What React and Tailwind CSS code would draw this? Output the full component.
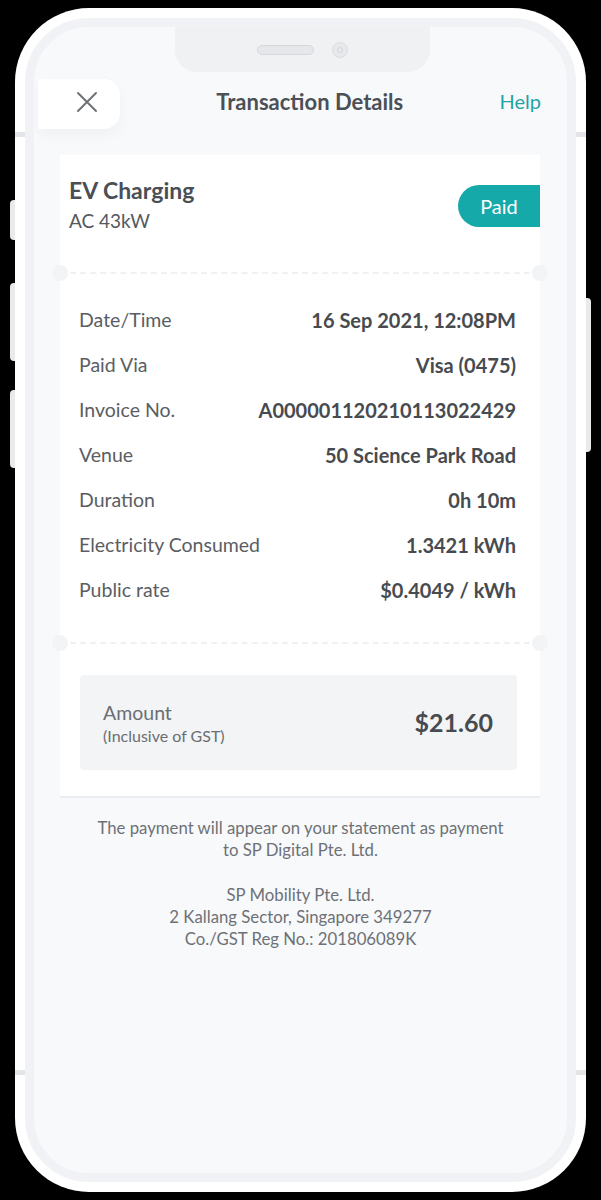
const rows = [
  { label: "Date/Time", value: "16 Sep 2021, 12:08PM" },
  { label: "Paid Via", value: "Visa (0475)" },
  { label: "Invoice No.", value: "A000001120210113022429" },
  { label: "Venue", value: "50 Science Park Road" },
  { label: "Duration", value: "0h 10m" },
  { label: "Electricity Consumed", value: "1.3421 kWh" },
  { label: "Public rate", value: "$0.4049 / kWh" },
];

const Divider = () => (
  <div className="relative h-0 border-t-2 border-dashed border-[#f0f1f4]">
    <span className="absolute -left-[8px] -top-[9px] w-[16px] h-[16px] rounded-full bg-[#f3f4f6]" />
    <span className="absolute -right-[8px] -top-[9px] w-[16px] h-[16px] rounded-full bg-[#f3f4f6]" />
  </div>
);

const App = () => {
  return (
    <div className="w-[601px] h-[1200px] bg-black pt-[8px] pl-[15px] font-['Lato',sans-serif]">
      <div className="relative w-[571px] h-[1184px] rounded-[74px] bg-white p-[10px]">
        {/* side buttons */}
        <span className="absolute -left-[5px] top-[192px] w-[5px] h-[40px] rounded-l bg-[#e9eaec]" />
        <span className="absolute -left-[5px] top-[275px] w-[5px] h-[78px] rounded-l bg-[#e9eaec]" />
        <span className="absolute -left-[5px] top-[382px] w-[5px] h-[78px] rounded-l bg-[#e9eaec]" />
        <span className="absolute -right-[5px] top-[290px] w-[5px] h-[154px] rounded-r bg-[#e9eaec]" />
        <span className="absolute left-0 top-[124px] w-[10px] h-[5px] bg-[#e4e5e8]" />
        <span className="absolute right-0 top-[124px] w-[10px] h-[5px] bg-[#e4e5e8]" />
        <span className="absolute left-0 top-[1062px] w-[10px] h-[5px] bg-[#e4e5e8]" />
        <span className="absolute right-0 top-[1062px] w-[10px] h-[5px] bg-[#e4e5e8]" />

        <div className="relative h-full rounded-[64px] border-[9px] border-[#f1f2f5] bg-[#f8f9fb] overflow-hidden">
          {/* notch */}
          <div className="absolute left-[141px] top-0 w-[255px] h-[45px] rounded-b-[22px] bg-[#f0f1f3] flex items-center justify-center gap-[18px]">
            <span className="w-[57px] h-[10px] rounded-full border border-[#d6d8db] bg-[#e6e7ea]" />
            <span className="w-[16px] h-[16px] rounded-full border border-[#dcdde0] bg-[#e8e9ec] flex items-center justify-center">
              <span className="w-[6px] h-[6px] rounded-full border border-[#d3d5d8]" />
            </span>
          </div>

          <div className="pt-[52px]">
            {/* header */}
            <div className="flex items-center h-[50px]">
              <div className="ml-[4px] w-[82px] h-[50px] bg-white rounded-r-[16px] shadow-[0_6px_14px_rgba(0,0,0,0.04)] flex items-center pl-[38px] pb-[4px]">
                <svg width="22" height="22" viewBox="0 0 22 22" fill="none" stroke="#6e7276" strokeWidth="2" strokeLinecap="round">
                  <path d="M2 2 L20 20 M20 2 L2 20" />
                </svg>
              </div>
              <div className="flex-1 mb-[6px] text-center text-[22px] font-bold text-[#4b5056]">Transaction Details</div>
              <div className="mr-[26px] mb-[6px] text-[20px] text-[#1ea4a6]">Help</div>
            </div>

            {/* receipt */}
            <div className="ml-[26px] mr-[27px] mt-[26px] bg-white">
              <div className="flex justify-between items-start pl-[9px] pt-[21px] pb-[39px]">
                <div>
                  <div className="text-[23px] leading-[28px] font-bold text-[#4a4f55]">EV Charging</div>
                  <div className="mt-[5px] text-[19px] leading-[24px] text-[#55595e]">AC 43kW</div>
                </div>
                <div className="mt-[9px] w-[82px] h-[42px] rounded-l-full bg-[#16a9a9] flex items-center justify-center text-[20px] text-white">
                  Paid
                </div>
              </div>

              <Divider />

              <div className="pl-[19px] pr-[24px] pt-[23px] pb-[30px]">
                {rows.map((r) => (
                  <div key={r.label} className="flex h-[45px] items-center justify-between">
                    <span className="text-[19.5px] text-[#5a5e63]">{r.label}</span>
                    <span className="text-[20px] font-bold text-[#474b50]">{r.value}</span>
                  </div>
                ))}
              </div>

              <Divider />

              <div className="pt-[31px] pb-[26px] pl-[20px] pr-[23px] border-b-2 border-[#ecedf0]">
                <div className="h-[95px] rounded-[4px] bg-[#f3f4f6] flex items-center justify-between pl-[23px] pr-[24px]">
                  <div>
                    <div className="text-[19.5px] leading-[25px] text-[#6a6e73]">Amount</div>
                    <div className="text-[16px] leading-[21px] text-[#6a6e73]">(Inclusive of GST)</div>
                  </div>
                  <div className="text-[25px] font-bold text-[#474b50]">$21.60</div>
                </div>
              </div>
            </div>

            {/* footer */}
            <div className="mt-[19px] text-center text-[16.75px] leading-[22px] text-[#6d7176]">
              <p>The payment will appear on your statement as payment</p>
              <p>to SP Digital Pte. Ltd.</p>
              <p className="mt-[23px]">SP Mobility Pte. Ltd.</p>
              <p>2 Kallang Sector, Singapore 349277</p>
              <p>Co./GST Reg No.: 201806089K</p>
            </div>
          </div>
        </div>
      </div>
    </div>
  );
};

export default App;
